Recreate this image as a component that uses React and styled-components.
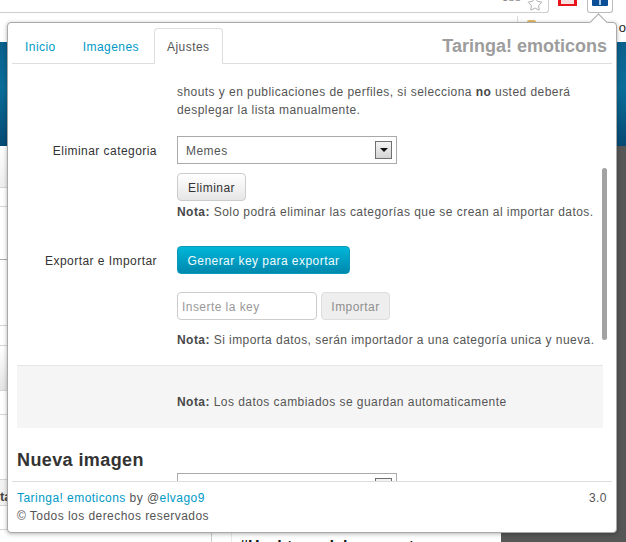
import React from "react";
import styled, { createGlobalStyle } from "styled-components";
import { Star } from "lucide-react";

const Global = createGlobalStyle`
  html, body { margin: 0; padding: 0; background: #fff; }
  body { font-family: "Liberation Sans", Arial, sans-serif; font-size: 12px; color: #555; letter-spacing: 0.45px; }
  * { box-sizing: border-box; }
`;

const Stage = styled.div`
  position: relative;
  width: 626px;
  height: 542px;
  overflow: hidden;
  background: #fff;
`;

/* ---------- page behind the popup ---------- */
const Toolbar = styled.div`
  display: flex;
  align-items: flex-start;
  height: 16px;
  background: #fff;
`;
const AddressBar = styled.div`
  flex: 0 0 549px;
  height: 13px;
  border-bottom: 1px solid #cfcfcf;
  border-right: 1px solid #cfcfcf;
  border-bottom-right-radius: 3px;
  display: flex;
  justify-content: flex-end;
  align-items: flex-end;
  padding-right: 5px;
  color: #888;
  font-size: 13px;
  line-height: 1;
  letter-spacing: 0;
  overflow: hidden;
`;
const UrlText = styled.span`
  margin-right: 6px;
  margin-bottom: 9px;
`;
const StarHolder = styled.span`
  display: block;
  height: 8px;
  color: #9a9a9a;
`;
const RedIcon = styled.div`
  width: 19px;
  height: 6px;
  margin-left: 9px;
  background: #e8141c;
  padding: 0 3px 2px;
  &::after { content: ""; display: block; height: 100%; background: #f6e0e0; }
`;
const ExtButton = styled.div`
  width: 26px;
  height: 13px;
  margin-left: 10px;
  border: 1px solid #bbb;
  border-top: 0;
  border-radius: 0 0 3px 3px;
  padding: 0 3px;
  display: flex;
  justify-content: center;
`;
const BlueIcon = styled.div`
  width: 16px;
  height: 6px;
  background: #0c4f97;
  display: flex;
  justify-content: center;
  border-radius: 0 0 1px 1px;
  &::after { content: ""; width: 2px; height: 5px; background: #a9c6e4; }
`;
const BookmarkBar = styled.div`
  height: 26px;
  background: #fff;
  display: flex;
  padding: 0;
  font-size: 13px;
  color: #222;
  line-height: 16px;
  letter-spacing: 0;
`;
const BookmarkSep = styled.span`
  width: 1px;
  height: 8px;
  margin-left: 517px;
  background: #ddd;
`;
const BookmarkFolder = styled.span`
  width: 9px;
  height: 6px;
  margin: 4px 0 0 9px;
  background: #e3b765;
  border-radius: 2px 2px 0 0;
`;
const BookmarkDot = styled.span`
  width: 3px;
  height: 3px;
  margin: 6px 0 0 14px;
  background: #333;
`;
const BookmarkLabel = styled.span`
  margin-left: auto;
  margin-top: 4px;
`;
const Hero = styled.div`
  height: 104px;
  background: linear-gradient(180deg, #0b5f8c 0%, #0a6d99 45%, #064a73 100%);
`;
const Below = styled.div`
  display: grid;
  grid-template-columns: 212px 289px 1fr;
  height: 397px;
`;
const SideColumn = styled.div`
  background: #fff;
  border-right: 1px solid #ccc;
`;
const SideRow = styled.div`
  height: ${(p) => p.$h}px;
  border-bottom: 1px solid ${(p) => p.$line || "#d5d5d5"};
  background: ${(p) => p.$bg || "#fff"};
  color: #444;
  font-size: 13px;
  font-weight: bold;
  line-height: 34px;
  letter-spacing: 0;
  overflow: hidden;
`;
const MainColumn = styled.div`
  background: #fff;
  padding-left: 19px;
  overflow: hidden;
`;
const MainInner = styled.div`
  height: 100%;
  padding: 392px 0 0 7px;
  border-left: 1px solid #e8e8e8;
  font-size: 16px;
  font-weight: bold;
  color: #111;
  line-height: 18px;
  letter-spacing: 0;
  white-space: nowrap;
`;
const DarkColumn = styled.div`
  background: #565656;
`;

/* ---------- popup ---------- */
const Popup = styled.div`
  position: absolute;
  left: 7px;
  top: 22px;
  width: 610px;
  height: 511px;
  background: #fff;
  border: 1px solid #a9a9a9;
  border-radius: 4px;
  box-shadow: 0 1px 4px rgba(0, 0, 0, 0.3);
  display: flex;
  flex-direction: column;
`;
const Notch = styled.div`
  position: absolute;
  left: 584px;
  top: -7px;
  width: 13px;
  height: 13px;
  background: #fff;
  border-left: 1px solid #a9a9a9;
  border-top: 1px solid #a9a9a9;
  transform: rotate(45deg);
`;
const Header = styled.div`
  position: relative;
  flex: none;
  margin: 5px 4px 0 4px;
  height: 36px;
  border-bottom: 1px solid #ddd;
  display: flex;
  align-items: stretch;
  justify-content: space-between;
`;
const Tabs = styled.nav`
  display: flex;
`;
const Tab = styled.a`
  display: block;
  height: ${(p) => (p.$active ? "36px" : "35px")};
  padding: 0 12px;
  margin-right: 2px;
  line-height: 36px;
  color: ${(p) => (p.$active ? "#555" : "#0099c6")};
  background: #fff;
  border: 1px solid ${(p) => (p.$active ? "#ddd" : "transparent")};
  border-bottom-color: ${(p) => (p.$active ? "#fff" : "transparent")};
  border-radius: 4px 4px 0 0;
  &:first-child { margin-right: 1px; }
`;
const Title = styled.div`
  font-size: 18px;
  font-weight: bold;
  letter-spacing: 0;
  color: #9d9d9d;
  line-height: 37px;
  padding-right: 5px;
`;
const Scroller = styled.div`
  position: relative;
  flex: 1;
  min-height: 0;
  overflow: hidden;
  padding: 0 13px 0 9px;
`;
const ScrollThumb = styled.div`
  position: absolute;
  right: 9px;
  top: 104px;
  width: 5px;
  height: 172px;
  border-radius: 3px;
  background: #a2a2a2;
`;
const Row = styled.div`
  display: grid;
  grid-template-columns: 140px 1fr;
  column-gap: 20px;
  margin-bottom: ${(p) => p.$mb || 0}px;
`;
const Label = styled.div`
  text-align: right;
  color: #333;
  line-height: 30px;
`;
const Controls = styled.div`
  display: flex;
  flex-direction: column;
  align-items: flex-start;
`;
const Para = styled.p`
  margin: ${(p) => p.$mt || 0}px 0 0;
  line-height: 18px;
  white-space: nowrap;
  color: #555;
  b { color: #484848; }
`;
const Select = styled.div`
  width: 220px;
  height: 28px;
  border: 1px solid #aaa;
  display: flex;
  align-items: center;
  justify-content: space-between;
  padding: 0 4px 0 8px;
  background: #fff;
  color: #555;
`;
const SelectValue = styled.span`
  margin-top: 2px;
`;
const SelectArrow = styled.span`
  width: 17px;
  height: 18px;
  border: 1px solid #707070;
  background: linear-gradient(180deg, #f4f4f4, #d4d4d4);
  display: flex;
  align-items: center;
  justify-content: center;
  &::after {
    content: "";
    border-left: 4px solid transparent;
    border-right: 4px solid transparent;
    border-top: 4px solid #111;
  }
`;
const Button = styled.button`
  height: 28px;
  padding: 2px 0 0;
  width: ${(p) => p.$w}px;
  margin-top: ${(p) => p.$mt || 0}px;
  font: inherit;
  letter-spacing: inherit;
  border-radius: 4px;
  border: 1px solid #ccc;
  color: #333;
  background: linear-gradient(180deg, #fff, #e6e6e6);
`;
const PrimaryButton = styled(Button)`
  border-color: #0a9ab8;
  color: #f2fbfd;
  background: linear-gradient(180deg, #00b6d8, #0088ae);
`;
const DisabledButton = styled(Button)`
  color: #8f8f8f;
  background: #eee;
  border-color: #ddd;
`;
const KeyRow = styled.div`
  display: flex;
  gap: 4px;
  margin-top: 18px;
`;
const KeyInput = styled.div`
  width: 140px;
  height: 28px;
  border: 1px solid #ccc;
  border-radius: 4px;
  padding: 0 4px;
  line-height: 28px;
  color: #999;
`;
const Actions = styled.div`
  margin-top: 16px;
  height: 63px;
  background: #f5f5f5;
  border-top: 1px solid #e5e5e5;
  padding: 27px 0 0 160px;
`;
const Heading = styled.h3`
  margin: 20px 0 0;
  font-size: 18px;
  line-height: 24px;
  color: #333;
  font-weight: bold;
  letter-spacing: 0.4px;
`;
const ClippedSelect = styled(Select)`
  margin: 1px 0 0 160px;
`;
const Footer = styled.footer`
  flex: none;
  margin: 0 4px;
  height: 51px;
  border-top: 1px solid #ddd;
  padding: 7px 5px 0;
  display: flex;
  justify-content: space-between;
  line-height: 18px;
`;
const Link = styled.a`
  color: #0099c6;
`;

export default function App() {
  return (
    <Stage>
      <Global />
      <Toolbar>
        <AddressBar>
          <UrlText>css</UrlText>
          <StarHolder>
            <Star size={16} strokeWidth={1.2} style={{ marginTop: -8, display: "block" }} />
          </StarHolder>
        </AddressBar>
        <RedIcon />
        <ExtButton>
          <BlueIcon />
        </ExtButton>
      </Toolbar>
      <BookmarkBar>
        <BookmarkSep />
        <BookmarkFolder />
        <BookmarkDot />
        <BookmarkLabel>o</BookmarkLabel>
      </BookmarkBar>
      <Hero />
      <Below>
        <SideColumn>
          <SideRow $h={42} $bg="linear-gradient(180deg,#fff,#eee)" />
          <SideRow $h={19} />
          <SideRow $h={53} $line="#aaa" />
          <SideRow $h={66} />
          <SideRow $h={20} />
          <SideRow $h={45} $bg="linear-gradient(180deg,#fff,#e4e4e4)" />
          <SideRow $h={24} />
          <SideRow $h={65} />
          <SideRow $h={26} $bg="#f2f2f2">ta</SideRow>
          <SideRow $h={24} />
        </SideColumn>
        <MainColumn>
          <MainInner>#Hashtags del momento</MainInner>
        </MainColumn>
        <DarkColumn />
      </Below>

      <Popup>
        <Notch />
        <Header>
          <Tabs>
            <Tab>Inicio</Tab>
            <Tab>Imagenes</Tab>
            <Tab $active>Ajustes</Tab>
          </Tabs>
          <Title>Taringa! emoticons</Title>
        </Header>
        <Scroller>
          <ScrollThumb />
          <Row $mb={17}>
            <div />
            <Para $mt={19}>
              shouts y en publicaciones de perfiles, si selecciona <b>no</b> usted deberá
              <br />
              desplegar la lista manualmente.
            </Para>
          </Row>
          <Row $mb={25}>
            <Label>Eliminar categoria</Label>
            <Controls>
              <Select>
                <SelectValue>Memes</SelectValue>
                <SelectArrow />
              </Select>
              <Button $w={69} $mt={9}>Eliminar</Button>
              <Para $mt={2}>
                <b>Nota:</b> Solo podrá eliminar las categorías que se crean al importar datos.
              </Para>
            </Controls>
          </Row>
          <Row>
            <Label>Exportar e Importar</Label>
            <Controls>
              <PrimaryButton $w={173}>Generar key para exportar</PrimaryButton>
              <KeyRow>
                <KeyInput>Inserte la key</KeyInput>
                <DisabledButton $w={69}>Importar</DisabledButton>
              </KeyRow>
              <Para $mt={11}>
                <b>Nota:</b> Si importa datos, serán importador a una categoría unica y nueva.
              </Para>
            </Controls>
          </Row>
          <Actions>
            <Para>
              <b>Nota:</b> Los datos cambiados se guardan automaticamente
            </Para>
          </Actions>
          <Heading>Nueva imagen</Heading>
          <ClippedSelect>
            <span />
            <SelectArrow />
          </ClippedSelect>
        </Scroller>
        <Footer>
          <div>
            <Link>Taringa! emoticons</Link> by @<Link>elvago9</Link>
            <br />© Todos los derechos reservados
          </div>
          <div>3.0</div>
        </Footer>
      </Popup>
    </Stage>
  );
}
